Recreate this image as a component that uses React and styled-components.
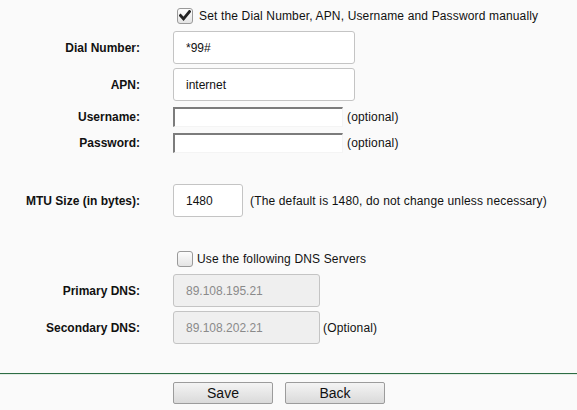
import styled, { createGlobalStyle } from 'styled-components'

const GlobalStyle = createGlobalStyle`
  html, body {
    margin: 0;
    padding: 0;
    background: #fafafa;
  }
  body {
    font-family: "Liberation Sans", Arial, sans-serif;
    font-size: 12px;
    color: #000;
  }
`

function CheckIcon() {
  return (
    <svg width="12" height="11" viewBox="0 0 12 11">
      <path d="M1.5 5.5 L4.5 8.8 L10.5 1.5" fill="none" stroke="#222" strokeWidth="2.8" strokeLinecap="square" />
    </svg>
  )
}

function App() {
  return (
    <Page>
      <GlobalStyle />
      <CheckRow $height={31}>
        <Spacer />
        <CheckLabel>
          <Box $checked><CheckIcon /></Box>
          Set the Dial Number, APN, Username and Password manually
        </CheckLabel>
      </CheckRow>

      <Row>
        <Label>Dial Number:</Label>
        <Field><TextBox $w={182} defaultValue="*99#" /></Field>
      </Row>
      <Row $top={4}>
        <Label>APN:</Label>
        <Field><TextBox $w={182} defaultValue="internet" /></Field>
      </Row>
      <Row $top={6}>
        <Label>Username:</Label>
        <Field><PlainBox /><Note>(optional)</Note></Field>
      </Row>
      <Row $top={6}>
        <Label>Password:</Label>
        <Field><PlainBox type="password" /><Note>(optional)</Note></Field>
      </Row>

      <Row $top={31}>
        <Label>MTU Size (in bytes):</Label>
        <Field>
          <TextBox $w={70} defaultValue="1480" />
          <Note $gap={7}>(The default is 1480, do not change unless necessary)</Note>
        </Field>
      </Row>

      <CheckRow $top={34} $height={16}>
        <Spacer />
        <CheckLabel $gap={4}>
          <Box />
          Use the following DNS Servers
        </CheckLabel>
      </CheckRow>

      <Row $top={7}>
        <Label>Primary DNS:</Label>
        <Field><TextBox $w={147} $disabled disabled defaultValue="89.108.195.21" /></Field>
      </Row>
      <Row $top={4}>
        <Label>Secondary DNS:</Label>
        <Field>
          <TextBox $w={147} $disabled disabled defaultValue="89.108.202.21" />
          <Note $gap={3}>(Optional)</Note>
        </Field>
      </Row>

      <Divider />

      <Buttons>
        <Spacer />
        <ButtonGroup>
          <Button>Save</Button>
          <Button>Back</Button>
        </ButtonGroup>
      </Buttons>
    </Page>
  )
}

export default App

const Page = styled.div`
  width: 577px;
  height: 410px;
  overflow: hidden;
  display: flex;
  flex-direction: column;
`

const Row = styled.div`
  display: grid;
  grid-template-columns: 140px 1fr;
  column-gap: 33px;
  align-items: center;
  margin-top: ${p => p.$top || 0}px;
`

const CheckRow = styled(Row)`
  height: ${p => p.$height}px;
`

const Spacer = styled.div``

const Label = styled.div`
  text-align: right;
  font-weight: bold;
  font-size: 12px;
  color: #111;
`

const Field = styled.div`
  display: flex;
  align-items: center;
`

const CheckLabel = styled.label`
  display: flex;
  align-items: center;
  gap: ${p => p.$gap || 6}px;
  margin-left: 4px;
  color: #111;
  letter-spacing: 0.15px;
`

const Box = styled.span`
  width: 14px;
  height: 14px;
  border: 1px solid #9a9a9a;
  border-radius: 3px;
  background: linear-gradient(#fdfdfd, #e4e4e4);
  display: flex;
  align-items: center;
  justify-content: center;
  box-sizing: content-box;
`

const TextBox = styled.input`
  box-sizing: border-box;
  width: ${p => p.$w}px;
  height: 33px;
  margin: 0;
  padding: 0 0 0 12px;
  border: 1px solid #c4c4c4;
  border-radius: 3px;
  background: ${p => (p.$disabled ? '#efefef' : '#fff')};
  font-family: "Liberation Sans", Arial, sans-serif;
  font-size: 12px;
  color: ${p => (p.$disabled ? '#8a8a8a' : '#111')};
  outline: none;
`

const PlainBox = styled.input`
  box-sizing: border-box;
  width: 170px;
  height: 20px;
  margin: 0;
  padding: 0 2px;
  border-style: solid;
  border-width: 2px 1px 1px 2px;
  border-color: #7c7c7c #f4f4f4 #f4f4f4 #7c7c7c;
  background: #fff;
  font-size: 12px;
  outline: none;
`

const Note = styled.span`
  margin-left: ${p => p.$gap ?? 4}px;
  color: #111;
  white-space: nowrap;
  letter-spacing: 0.15px;
`

const Divider = styled.div`
  margin-top: 29px;
  height: 1px;
  background: #2d6d44;
  border-bottom: 1px solid #e4ece6;
`

const Buttons = styled(Row)`
  margin-top: 7px;
`

const ButtonGroup = styled.div`
  display: flex;
  gap: 12px;
`

const Button = styled.button`
  width: 100px;
  height: 22px;
  margin: 0;
  padding: 0;
  border: 1px solid #9c9c9c;
  border-radius: 2px;
  background: linear-gradient(#f4f4f4, #dadada);
  font-family: "Liberation Sans", Arial, sans-serif;
  font-size: 14px;
  color: #111;
`
